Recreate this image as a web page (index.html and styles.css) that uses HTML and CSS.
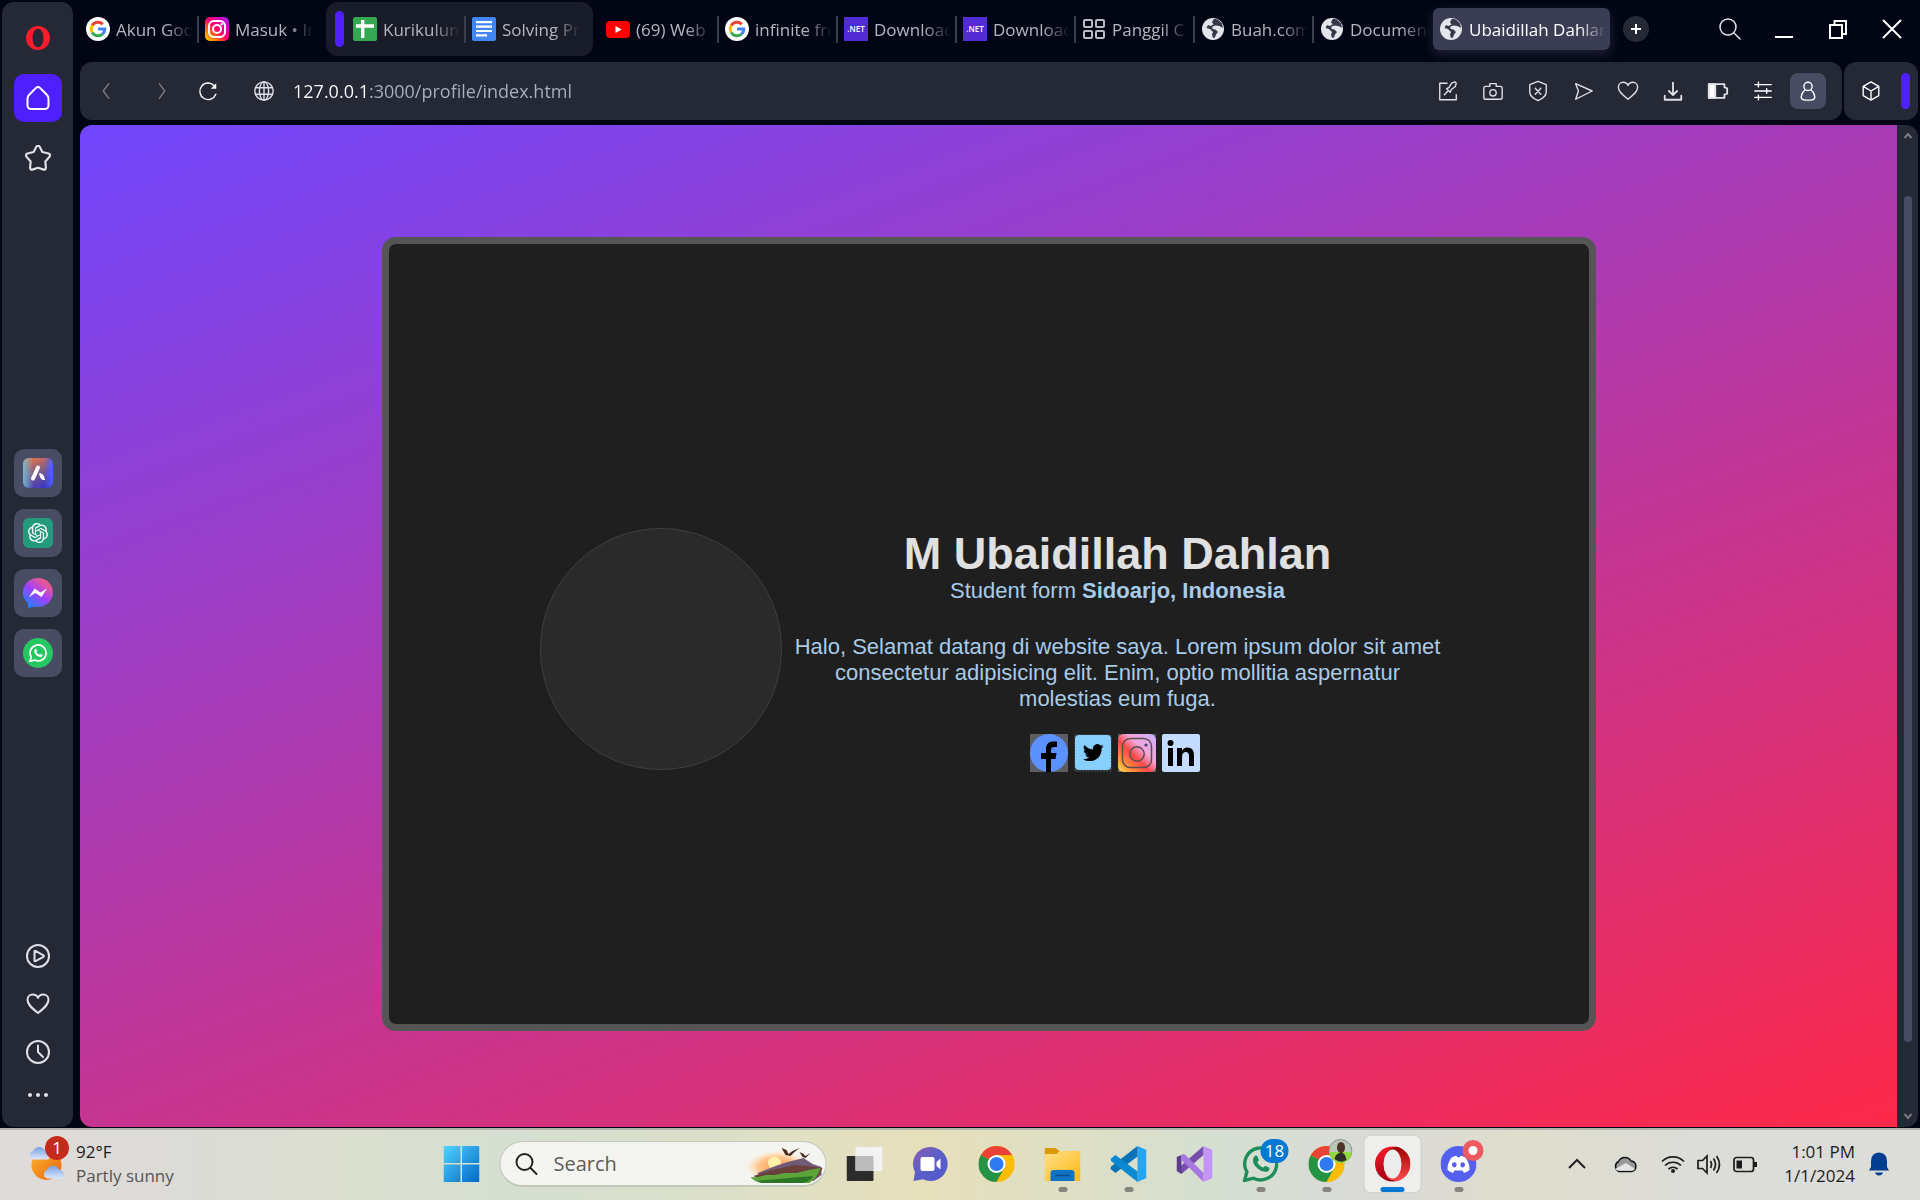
FILE: index.html
```html
<!DOCTYPE html>
<html lang="en">
<head>
<meta charset="utf-8">
<title>Ubaidillah Dahlan</title>
<link rel="stylesheet" href="styles.css">
</head>
<body>
<svg class="defs" aria-hidden="true">
  <defs>
    <linearGradient id="ig" x1="0" y1="1" x2="1" y2="0"><stop offset="0" stop-color="#ffd600"/><stop offset=".25" stop-color="#ff7a00"/><stop offset=".5" stop-color="#ff0069"/><stop offset=".8" stop-color="#d300c5"/><stop offset="1" stop-color="#7638fa"/></linearGradient>
    <linearGradient id="igx" x1="0" y1="1" x2="1" y2="0"><stop offset="0" stop-color="#ffe14d"/><stop offset=".22" stop-color="#ff8a3d"/><stop offset=".42" stop-color="#ff4646"/><stop offset=".62" stop-color="#f2a6d8"/><stop offset="1" stop-color="#cdb0ff"/></linearGradient>
    <linearGradient id="aria" x1=".3" y1="0" x2=".7" y2="1"><stop offset="0" stop-color="#e0704a"/><stop offset=".5" stop-color="#7a5a8c"/><stop offset="1" stop-color="#3a35c0"/></linearGradient>
    <linearGradient id="ariaSide" x1="0" y1="0" x2="1" y2="0"><stop offset="0" stop-color="#6fc0d8" stop-opacity=".9"/><stop offset=".35" stop-color="#6fc0d8" stop-opacity="0"/><stop offset=".7" stop-color="#4a60ff" stop-opacity="0"/><stop offset="1" stop-color="#4a60ff"/></linearGradient>
    <linearGradient id="msg" x1="0.1" y1="1" x2=".8" y2="0"><stop offset="0" stop-color="#0a8cff"/><stop offset=".5" stop-color="#a040ff"/><stop offset="1" stop-color="#ff6070"/></linearGradient>
    <linearGradient id="win" x1="0" y1="0" x2="1" y2="1"><stop offset="0" stop-color="#4fd4ff"/><stop offset="1" stop-color="#0067c8"/></linearGradient>
    <linearGradient id="sun" x1="0" y1="0" x2="1" y2="1"><stop offset="0" stop-color="#f8b830"/><stop offset="1" stop-color="#f0600c"/></linearGradient>
    <linearGradient id="cloud" x1="0" y1="0" x2="0" y2="1"><stop offset="0" stop-color="#7a9fe0"/><stop offset="1" stop-color="#dce8fb"/></linearGradient>
    <linearGradient id="operaL" x1="0" y1="0" x2="0" y2="1"><stop offset="0" stop-color="#ff1b2d"/><stop offset="1" stop-color="#a00012"/></linearGradient>
    <linearGradient id="operaR" x1="0" y1="0" x2="0" y2="1"><stop offset="0" stop-color="#9c0000"/><stop offset="1" stop-color="#ff4b4b"/></linearGradient>
    <linearGradient id="teams" x1="0" y1="0" x2="1" y2="1"><stop offset="0" stop-color="#8a5fb0"/><stop offset=".5" stop-color="#5a5fc8"/><stop offset="1" stop-color="#5059c9"/></linearGradient>
    <linearGradient id="folder" x1="0" y1="0" x2="1" y2="1"><stop offset="0" stop-color="#ffe08a"/><stop offset="1" stop-color="#fdb813"/></linearGradient>
    <radialGradient id="glow"><stop offset="0" stop-color="#ff9a50"/><stop offset=".6" stop-color="#ffc58c"/><stop offset="1" stop-color="#ffe9c8" stop-opacity="0"/></radialGradient>
    <symbol id="i-google" viewBox="0 0 24 24"><circle cx="12" cy="12" r="12" fill="#fff"/><g fill="none" stroke-width="3"><path d="M6.2 8.6A6.8 6.8 0 0 1 16.8 7.2" stroke="#ea4335"/><path d="M6.2 15.4a6.8 6.8 0 0 1 0-6.8" stroke="#fbbc05"/><path d="M16.4 17.2a6.8 6.8 0 0 1-10.2-1.8" stroke="#34a853"/><path d="M12 12h6.8a6.8 6.8 0 0 1-2.4 5.2" stroke="#4285f4"/></g></symbol>
    <symbol id="i-insta" viewBox="0 0 24 24"><rect width="24" height="24" rx="5" fill="url(#ig)"/><g fill="none" stroke="#fff" stroke-width="2"><rect x="4" y="4" width="16" height="16" rx="5"/><circle cx="12" cy="12" r="4"/></g><circle cx="16.7" cy="7.3" r="1.2" fill="#fff"/></symbol>
    <symbol id="i-sheets" viewBox="0 0 24 24"><rect width="24" height="24" rx="2" fill="#34a853"/><path d="M9.700 3v18M3 9h18" stroke="#fff" stroke-width="3.4"/></symbol>
    <symbol id="i-docs" viewBox="0 0 24 24"><rect width="24" height="24" rx="2" fill="#4285f4"/><path d="M4 5.2h16M4 9.6h16M4 14h16M4 18.4h11" stroke="#fff" stroke-width="2.2"/></symbol>
    <symbol id="i-yt" viewBox="0 0 24 24"><rect y="4" width="24" height="17" rx="4" fill="#f00"/><path d="M9.500 9v7l6.200-3.500z" fill="#fff"/></symbol>
    <symbol id="i-net" viewBox="0 0 24 24"><rect width="24" height="24" fill="#512bd4"/><text x="12" y="15" text-anchor="middle" font-family="Open Sans, sans-serif" font-size="8" font-weight="600" fill="#fff">.NET</text></symbol>
    <symbol id="i-grid" viewBox="0 0 24 24"><g fill="none" stroke="#b9bbc2" stroke-width="2"><rect x="2" y="3" width="8" height="7" rx="1"/><rect x="14" y="3" width="8" height="7" rx="1"/><rect x="2" y="14" width="8" height="7" rx="1"/><rect x="14" y="14" width="8" height="7" rx="1"/></g></symbol>
    <symbol id="i-earth" viewBox="0 0 24 24"><circle cx="12" cy="12" r="11" fill="#e4e6ec"/><path d="M13 1.800 11 5l1.500 2.500-3 1.500-2.500-1-1.500 3 3.500 1 3 3-1 2.500 1 3.500 2-.5 1-3 2-2.500-2.500-2.500-3-.5 0-2.500 3-1 4 .5 3.500 2-1-4.500-4-4z" fill="#343849"/></symbol>
    <symbol id="i-heart" viewBox="0 0 24 24"><path d="M12 21C5 15.500 1.500 12.200 1.500 7.800 1.500 4.600 3.900 2.500 6.700 2.500 9.200 2.500 11.200 4 12 6c.8-2 2.800-3.500 5.300-3.500 2.800 0 5.200 2.100 5.200 5.300C22.500 12.200 19 15.500 12 21z"/></symbol>
    <symbol id="i-search" viewBox="0 0 24 24"><circle cx="10" cy="10" r="8"/><path d="m16 16 6 6"/></symbol>
    <symbol id="i-chrome" viewBox="0 0 36 36"><circle cx="18" cy="18" r="18" fill="#fbbc05"/><path d="M18 18 2.400 9A18 18 0 0 1 33.600 9z" fill="#ea4335"/><path d="M18 18 2.400 9A18 18 0 0 0 18 36l7.800-13.500z" fill="#249345"/><path d="M18 9h15.600A18 18 0 0 1 18 36l7.800-13.500z" fill="#fbbc05"/><circle cx="18" cy="18" r="9" fill="#fff"/><circle cx="18" cy="18" r="7" fill="#2f7af0"/></symbol>
    <symbol id="i-wa" viewBox="0 0 36 36"><path d="M2 34.500 4.400 26A16 16 0 1 1 11 32.200z" fill="none" stroke-width="3.400" stroke="currentColor"/><path d="M12.500 10c1-.8 2-.5 2.500.5l1.300 3c.3 1-.9 2-1.500 2.700 1.300 2.600 3.300 4.300 6 5.400.8-.7 1.500-2 2.600-1.600l3 1.500c.9.500.6 2.300-.2 3.200-4 4-15.500-3-15.800-10.200 0-1.800 1-3.700 2.100-4.500z" fill="currentColor"/></symbol>
  </defs>
</svg>

<div class="desktop">
  <nav class="sidebar" aria-label="Browser sidebar">
    <button class="side-btn logo" aria-label="Opera"><svg viewBox="0 0 24 24"><path fill-rule="evenodd" d="M12 0a12 12 0 1 0 0 24A12 12 0 1 0 12 0zm0 2.800c3.300 0 5.400 4 5.400 9.200S15.300 21.200 12 21.200 6.600 17.200 6.600 12 8.700 2.800 12 2.800z" fill="#ff1b2d"/></svg></button>
    <button class="side-btn home" aria-label="Home"><svg class="line" viewBox="0 0 24 24"><path d="M10 1.900 3.200 8.700C2 10 1.500 11 1.500 12.500V19.500A3.500 3.500 0 0 0 5 23h14a3.500 3.500 0 0 0 3.500-3.500v-7c0-1.500-.5-2.500-1.700-3.800L14 1.900a2.800 2.800 0 0 0-4 0z"/></svg></button>
    <button class="side-btn" aria-label="Bookmarks"><svg class="line star" viewBox="0 0 24 24"><path d="M10.500 1.500Q12-.5 13.500 1.500L16 6.500 21.800 7.800Q24 8.800 22.500 11L18.800 15.300 19.300 21Q19 23.500 16.500 22.500L12 21 7.500 22.500Q5 23.500 4.700 21L5.200 15.300 1.500 11Q0 8.800 2.200 7.800L8 6.500z"/></svg></button>
    <div class="side-apps">
      <button class="side-btn app" aria-label="Aria"><svg viewBox="0 0 30 30"><rect width="30" height="30" rx="6" fill="url(#aria)"/><rect width="30" height="30" rx="6" fill="url(#ariaSide)"/><path d="m10 20.500 5-11" stroke="#fff" stroke-width="4" stroke-linecap="round"/><path d="M16 15q5 0 6 7-5 1-6-7z" fill="#fff"/></svg></button>
      <button class="side-btn app" aria-label="ChatGPT"><svg viewBox="0 0 36 36"><rect width="36" height="36" rx="7" fill="#249a7d"/><path transform="translate(6 6)" fill="#fff" d="M22.2819 9.8211a5.9847 5.9847 0 0 0-.5157-4.9108 6.0462 6.0462 0 0 0-6.5098-2.9A6.0651 6.0651 0 0 0 4.9807 4.1818a5.9847 5.9847 0 0 0-3.9977 2.9 6.0462 6.0462 0 0 0 .7427 7.0966 5.98 5.98 0 0 0 .511 4.9107 6.051 6.051 0 0 0 6.5146 2.9001A5.9847 5.9847 0 0 0 13.2599 24a6.0557 6.0557 0 0 0 5.7718-4.2058 5.9894 5.9894 0 0 0 3.9977-2.9001 6.0557 6.0557 0 0 0-.7475-7.0729zm-9.022 12.6081a4.4755 4.4755 0 0 1-2.8764-1.0408l.1419-.0804 4.7783-2.7582a.7948.7948 0 0 0 .3927-.6813v-6.7369l2.02 1.1686a.071.071 0 0 1 .038.052v5.5826a4.504 4.504 0 0 1-4.4945 4.4944zm-9.6607-4.1254a4.4708 4.4708 0 0 1-.5346-3.0137l.142.0852 4.783 2.7582a.7712.7712 0 0 0 .7806 0l5.8428-3.3685v2.3324a.0804.0804 0 0 1-.0332.0615L9.74 19.9502a4.4992 4.4992 0 0 1-6.1408-1.6464zM2.3408 7.8956a4.485 4.485 0 0 1 2.3655-1.9728V11.6a.7664.7664 0 0 0 .3879.6765l5.8144 3.3543-2.0201 1.1685a.0757.0757 0 0 1-.071 0l-4.8303-2.7865A4.504 4.504 0 0 1 2.3408 7.8956zm16.5963 3.8558L13.1038 8.364 15.1192 7.2a.0757.0757 0 0 1 .071 0l4.8303 2.7913a4.4944 4.4944 0 0 1-.6765 8.1042v-5.6772a.79.79 0 0 0-.407-.667zm2.0107-3.0231l-.142-.0852-4.7735-2.7818a.7759.7759 0 0 0-.7854 0L9.409 9.2297V6.8974a.0662.0662 0 0 1 .0284-.0615l4.8303-2.7866a4.4992 4.4992 0 0 1 6.6802 4.66zM8.3065 12.863l-2.02-1.1638a.0804.0804 0 0 1-.038-.0567V6.0742a4.4992 4.4992 0 0 1 7.3757-3.4537l-.142.0805L8.704 5.459a.7948.7948 0 0 0-.3927.6813zm1.0976-2.3654l2.602-1.4998 2.6069 1.4998v2.9994l-2.5974 1.4997-2.6067-1.4997Z"/></svg></button>
      <button class="side-btn app" aria-label="Messenger"><svg viewBox="0 0 30 30"><path d="M15 0a15 14.500 0 1 1-4 28.500L6 30c-1 0-1-1-1-4.500A14.500 14.500 0 0 1 15 0z" fill="url(#msg)"/><path d="m6 19 5.500-8.500 6 4L24 10.500l-5.500 8.500-6-4z" fill="#fff"/></svg></button>
      <button class="side-btn app" aria-label="WhatsApp"><svg viewBox="0 0 30 30"><circle cx="15" cy="15" r="15" fill="#25c763"/><use href="#i-wa" x="6" y="6" width="18" height="18" color="#fff"/></svg></button>
    </div>
    <div class="side-foot">
      <button class="foot-btn" aria-label="Player"><svg class="line" viewBox="0 0 24 24"><circle cx="12" cy="12" r="11"/><path d="M8.500 7.500v9q0 1 1 .6l8-4.300q1-.7 0-1.500l-8-4.400q-1-.4-1 .6z"/></svg></button>
      <button class="foot-btn" aria-label="Pinboards"><svg class="line"><use href="#i-heart"/></svg></button>
      <button class="foot-btn" aria-label="History"><svg class="line" viewBox="0 0 24 24"><circle cx="12" cy="12" r="11"/><path d="M12 5.500V12l5 5"/></svg></button>
      <button class="foot-btn dots" aria-label="More"><svg viewBox="0 0 24 24"><g fill="#dfe1e6"><circle cx="4" cy="12" r="2"/><circle cx="12" cy="12" r="2"/><circle cx="20" cy="12" r="2"/></g></svg></button>
    </div>
  </nav>

  <div class="browser">
    <header class="tabstrip">
      <button class="tab sep"><svg><use href="#i-google"/></svg><span>Akun Goo</span></button>
      <button class="tab"><svg><use href="#i-insta"/></svg><span>Masuk • In</span></button>
      <div class="tab-group">
        <i class="pill"></i>
        <button class="tab sep"><svg><use href="#i-sheets"/></svg><span>Kurikulum</span></button>
        <button class="tab"><svg><use href="#i-docs"/></svg><span>Solving Pr</span></button>
      </div>
      <button class="tab sep"><svg><use href="#i-yt"/></svg><span>(69) Web</span></button>
      <button class="tab sep"><svg><use href="#i-google"/></svg><span>infinite fre</span></button>
      <button class="tab sep"><svg><use href="#i-net"/></svg><span>Download</span></button>
      <button class="tab sep"><svg><use href="#i-net"/></svg><span>Download</span></button>
      <button class="tab sep"><svg><use href="#i-grid"/></svg><span>Panggil C</span></button>
      <button class="tab sep"><svg><use href="#i-earth"/></svg><span>Buah.com</span></button>
      <button class="tab"><svg><use href="#i-earth"/></svg><span>Document</span></button>
      <button class="tab active"><svg><use href="#i-earth"/></svg><span>Ubaidillah Dahlan</span></button>
      <button class="new-tab" aria-label="New tab"><svg viewBox="0 0 12 12"><path d="M6 1v10M1 6h10" stroke="#fff" stroke-width="2"/></svg></button>
      <div class="win-ctl">
        <button aria-label="Search tabs"><svg class="line thin"><use href="#i-search"/></svg></button>
        <button aria-label="Minimize"><svg viewBox="0 0 24 24"><path d="M3 20h18" stroke="#fff" stroke-width="2"/></svg></button>
        <button aria-label="Restore"><svg viewBox="0 0 24 24" fill="none" stroke="#fff" stroke-width="2"><path d="M4 8h12v13H4zM8.500 8V4H20v13h-4"/></svg></button>
        <button aria-label="Close"><svg viewBox="0 0 24 24"><path d="m3 3 18 18M21 3 3 21" stroke="#fff" stroke-width="2"/></svg></button>
      </div>
    </header>

    <div class="bars">
      <div class="toolbar">
        <button class="nav-btn dim" aria-label="Back"><svg class="line thin" viewBox="0 0 24 24"><path d="m15 4-6 8 6 8"/></svg></button>
        <button class="nav-btn dim" aria-label="Forward"><svg class="line thin" viewBox="0 0 24 24"><path d="m9 4 6 8-6 8"/></svg></button>
        <button class="nav-btn reload" aria-label="Reload"><svg class="line thin" viewBox="0 0 24 24"><path d="M20.500 15.500A9 9 0 1 1 18.500 6L20 8"/><path d="M21 3.500v6h-6z" fill="#fff" stroke="none"/></svg></button>
        <button class="nav-btn site" aria-label="Site information"><svg class="line thin" viewBox="0 0 24 24"><circle cx="12" cy="12" r="10"/><ellipse cx="12" cy="12" rx="5" ry="10"/><path d="M3 8.500h18M3 15.500h18M12 2v20"/></svg></button>
        <input class="url" type="text" aria-label="Address" value="127.0.0.1:3000/profile/index.html">
        <div class="tools">
          <button aria-label="Easy setup"><svg class="line thin" viewBox="0 0 24 24"><path d="M11 3.500H3v18h18V16M8 16l4.500-4.500M10.500 9.500l4 4 .8-2.800L20 7l1-3.500L19.500 2 16 3.500l-3 4.800z"/></svg></button>
          <button aria-label="Snapshot"><svg class="line thin" viewBox="0 0 24 24"><path d="M8.500 4h7v3H20q2 0 2 2v10q0 2-2 2H4q-2 0-2-2V9q0-2 2-2h4.500z"/><circle cx="12" cy="14" r="3.500"/></svg></button>
          <button aria-label="Ad blocker"><svg class="line thin" viewBox="0 0 24 24"><path d="M12 1.500 21 5v8q0 5.500-9 9.500-9-4-9-9.500V5zM9 9l6 6.500M15 9l-6 6.500"/></svg></button>
          <button aria-label="Flow"><svg class="line thin" viewBox="0 0 24 24"><path d="m4 4 18 8L4 21l3-9z"/></svg></button>
          <button aria-label="Favourite"><svg class="line thin"><use href="#i-heart"/></svg></button>
          <button aria-label="Downloads"><svg class="line" viewBox="0 0 24 24"><path d="M12 3v13m-4.500-4 4.500 4.500 4.500-4.500M3 17v4.500h18V17"/></svg></button>
          <button aria-label="Battery saver"><svg class="line" viewBox="0 0 24 24"><path d="M2 4.500h17V8l3 1v6l-3 1v3.500H2z"/><path d="M2 4.500h7v15H2z" fill="#fff"/></svg></button>
          <button aria-label="Settings"><svg class="line thin bright" viewBox="0 0 24 24"><path d="M3 5h18M3 12h18M3 19h18M7 2.500v5M16 9.500v5M7 16.500v5"/></svg></button>
          <button class="profile" aria-label="Profile"><svg class="line thin bright" viewBox="0 0 24 24"><circle cx="12" cy="7" r="4.500"/><path d="M8.500 11Q5 14 4.500 18.500 5 22 9 22h6q4 0 4.500-3.500Q19 14 15.500 11"/></svg></button>
        </div>
      </div>
      <div class="extras">
        <button aria-label="Extensions"><svg class="line thin bright" viewBox="0 0 24 24"><path d="m12 2 8.500 5v10L12 22l-8.500-5V7zM3.500 7l8.500 5 8.500-5M12 12v10"/></svg></button>
        <i class="pill"></i>
      </div>
    </div>

    <div class="viewport">
      <main class="page">
        <section class="card">
          <div class="avatar"></div>
          <div class="about">
            <h1>M Ubaidillah Dahlan</h1>
            <p>Student form <b>Sidoarjo, Indonesia</b></p>
            <p class="bio">Halo, Selamat datang di website saya. Lorem ipsum dolor sit amet consectetur adipisicing elit. Enim, optio mollitia aspernatur molestias eum fuga.</p>
            <div class="social">
              <a href="#fb" aria-label="Facebook"><svg viewBox="0 0 38 38"><rect width="38" height="38" fill="#5b5e62"/><circle cx="19" cy="19" r="19" fill="#5c92ff"/><path d="M16 38V25h-5v-6h5v-4c0-5 3-7.500 7-7.500h4V13h-2.500c-2.500 0-3.500 1-3.500 3v3h5.500l-1 6H21v13z" fill="#000"/></svg></a>
              <a href="#tw" aria-label="Twitter"><svg viewBox="0 0 38 38"><rect x="1" y="1" width="36" height="36" fill="none" stroke="#555a60" stroke-dasharray="2 1"/><rect x="1" y="1" width="36" height="35" rx="4" fill="#86cfff"/><path d="M29.500 12q-1 .5-2.300.7 1.300-.8 1.800-2.200-1.200.8-2.600 1a4.300 4.300 0 0 0-7.300 3.900q-5.300-.3-8.700-4.500a4.300 4.300 0 0 0 1.300 5.700q-1 0-1.900-.5 0 3.300 3.400 4.300-1 .2-1.900 0 .9 2.800 4 3-2.800 2-6.300 1.800 3 2 6.600 1.900c8 0 12.300-6.500 12-12.700q1.300-1 1.900-2.400z" fill="#000"/></svg></a>
              <a href="#ig" aria-label="Instagram"><svg viewBox="0 0 38 38"><rect width="38" height="38" fill="#66615f"/><rect width="38" height="38" rx="6" fill="url(#igx)"/><g fill="none" stroke="#5a4d50" stroke-width="1.500"><rect x="4.500" y="4.500" width="29" height="29" rx="8"/><circle cx="19" cy="20" r="7.200"/></g><circle cx="28" cy="11" r="1.600" fill="#4a3d60"/></svg></a>
              <a href="#in" aria-label="LinkedIn"><svg viewBox="0 0 38 38"><rect width="38" height="38" rx="2" fill="#c3dcff"/><circle cx="8.500" cy="9" r="3" fill="#000"/><path d="M6 14h5v18H6zM15 14h5v2.500q2-3 5.500-3 6.500 0 6.500 8V32h-5V22.500q0-4.500-3-4.500-4 0-4 5v9h-5z" fill="#000"/></svg></a>
            </div>
          </div>
        </section>
      </main>
      <div class="scrollbar">
        <svg viewBox="0 0 10 10"><path d="m1.500 7 3.500-4 3.500 4" /></svg>
        <div class="track"><i></i></div>
        <svg viewBox="0 0 10 10"><path d="m1.500 3 3.500 4 3.500-4" /></svg>
      </div>
    </div>
  </div>
</div>

<footer class="taskbar">
  <button class="weather">
    <span class="weather-icon"><svg viewBox="0 0 38 38"><circle cx="18.500" cy="20" r="15" fill="url(#sun)"/><path d="M5 14.500a4.500 4.500 0 0 1 0-8.500 7 7 0 0 1 12-1q7 2 3.500 9.500z" fill="url(#cloud)"/><path d="M19 33.500a4.500 4.500 0 0 1 0-8.500 6.500 6.500 0 0 1 12-.5q5 1 5 5 0 4-3 4z" fill="url(#cloud)"/></svg><em>1</em></span>
    <span class="two"><span>92°F</span><small>Partly sunny</small></span>
  </button>
  <div class="tasks">
    <button class="task start" aria-label="Start"><svg viewBox="0 0 36 36"><path d="M1 0h16v17H0V1q0-1 1-1zM18.500 0H35q1 0 1 1v16H18.500zM0 18.500h17V36H1q-1 0-1-1zM18.500 18.500H36V35q0 1-1 1H18.500z" fill="url(#win)"/></svg></button>
    <label class="search">
      <svg class="line"><use href="#i-search"/></svg>
      <input type="search" placeholder="Search" aria-label="Search">
      <svg class="scene" viewBox="0 0 78 38"><ellipse cx="32" cy="20" rx="32" ry="17" fill="url(#glow)"/><circle cx="29" cy="16" r="6.500" fill="#fff0a8"/><path d="M12 26 30 19l12-4 16-4 9 6 9 3v8l-8 6H18z" fill="#715a76"/><path d="M8 29l18-6 10-2 12-3 12 1 17 2-4 8-10 6H20z" fill="#6b3f3c"/><path d="M5 30q8 1 15-2l9 0 10-2 12 0 12-3 12-2q-3 10-11 15H16Q9 35 5 30z" fill="#5ba53a"/><path d="M12 34q18-2 56-5-4 6-12 7H16z" fill="#2e7427"/><path d="m36 1 5 2 2 4 4-3 7-3-6 5-3 3-5-1zM54 5l4 2 2 2 5-3-5 5-3-1z" fill="#4a2c20"/></svg>
    </label>
    <button class="task" aria-label="Task view"><svg viewBox="0 0 36 36"><rect y="10" width="27" height="25" rx="1" fill="#2c2c2b"/><rect x="9" y="1" width="27" height="24" rx="1" fill="#f2f2f2"/><path d="M9 10h18v15H9z" fill="#bcbcbc"/></svg></button>
    <button class="task" aria-label="Chat"><svg viewBox="0 0 36 36"><path d="M18 1a17 17 0 1 1-7.500 32.200L1 35l1.500-9A17 17 0 0 1 18 1z" fill="url(#teams)"/><rect x="8" y="11" width="14" height="14" rx="2" fill="#fff"/><path d="m24 16 4-3.500v11L24 20z" fill="#fff"/></svg></button>
    <button class="task" aria-label="Chrome"><svg><use href="#i-chrome"/></svg></button>
    <button class="task run" aria-label="File Explorer"><svg viewBox="0 0 36 36"><path d="M0 3q0-1 1-1h10l4 3v8H0z" fill="#dc9b05"/><path d="M0 8h12l3-3h20q1 0 1 1v29H0z" fill="url(#folder)"/><path d="M6 35V27q0-3 3-3h18q3 0 3 3v8z" fill="#0f72c4"/><path d="M11 29.500h14" stroke="#0a4c90" stroke-width="1.500"/></svg></button>
    <button class="task run" aria-label="Visual Studio Code"><svg viewBox="0 0 36 36"><path d="m27 0 9 4v28l-9 4z" fill="#27a4f2"/><path d="M27 0v10.500L5 27l-5-4q-.5-1 0-2z" fill="#0a72b8"/><path d="M27 36V25.500L5 9 .5 12.500q-1 1 0 2.500z" fill="#0b88d2"/></svg></button>
    <button class="task" aria-label="Visual Studio"><svg viewBox="0 0 36 36"><path d="M5 28 27 9V0L3 21z" fill="#7750ad"/><path d="M0 11v14l5 3V9z" fill="#5c3d91"/><path d="M5 9q2-2 4 0l18 18v9L5 14z" fill="#a778df"/><path d="m27 0 9 4v28l-9 4z" fill="#c494f7"/></svg></button>
    <button class="task run wa" aria-label="WhatsApp"><svg><use href="#i-wa"/></svg><em class="count">18</em></button>
    <button class="task run" aria-label="Chrome profile"><svg><use href="#i-chrome"/></svg><em class="face"><svg viewBox="0 0 24 24"><circle cx="12" cy="12" r="11.500" fill="#bdc9b8" stroke="#8a8f86"/><path d="M1 13h22a11 11 0 0 1-22 0z" fill="#8fdc3c"/><path d="M6 20q1-5 5-6h3q3 1 4 7-6 4-12-1z" fill="#2f2c2a"/><ellipse cx="12.500" cy="8.500" rx="4" ry="5.500" fill="#4b3527"/></svg></em></button>
    <button class="task run current" aria-label="Opera"><svg viewBox="0 0 36 36"><ellipse cx="18" cy="18" rx="17.500" ry="17.500" fill="url(#operaL)"/><path d="M12 5.500q4-4.500 10-4.800A17.500 17.500 0 0 1 22 35q-6-.5-10-4.500z" fill="url(#operaR)"/><ellipse cx="18" cy="18" rx="9" ry="14.500" fill="#ececec"/></svg></button>
    <button class="task run" aria-label="Discord"><svg viewBox="0 0 36 36"><circle cx="18" cy="18" r="18" fill="#5560ee"/><path d="M11 11.500q3-1.700 5-1.800l.8 1.500h2.400l.8-1.500q2 .1 5 1.800 4.500 6.500 4 12.500-2.500 2.200-5.500 3l-1.500-2.500h-8L12.500 27Q9.500 26.200 7 24q-.5-6 4-12.500z" fill="#fff"/><ellipse cx="13.800" cy="18.800" rx="2.300" ry="2.600" fill="#5560ee"/><ellipse cx="22.200" cy="18.800" rx="2.300" ry="2.600" fill="#5560ee"/></svg><em class="live"></em></button>
  </div>
  <div class="tray">
    <button aria-label="Show hidden icons"><svg viewBox="0 0 24 24" fill="none" stroke="#222" stroke-width="2"><path d="m4 16 8-8 8 8"/></svg></button>
    <button class="cloud" aria-label="OneDrive"><svg viewBox="0 0 24 24"><path d="M6 19.500a5.500 5.500 0 0 1-.5-10A7 7 0 0 1 18 9a5.300 5.300 0 0 1 .5 10.500z" fill="#999" stroke="#111" stroke-width="1.500"/><path d="M2 17 13 11l9 6q-1 1.800-3 1.800H6q-3 0-4-1.800z" fill="#e4e4e4"/></svg></button>
    <button aria-label="Network"><svg viewBox="0 0 24 24" fill="none" stroke="#1c1c1c" stroke-width="1.700"><path d="M1 9.500a15.500 15.500 0 0 1 22 0M4 13.500a11.500 11.500 0 0 1 16 0M7.500 17a7 7 0 0 1 9 0"/><circle cx="12" cy="19" r="2" fill="#1c1c1c" stroke="none"/></svg></button>
    <button aria-label="Volume"><svg viewBox="0 0 24 24" fill="none" stroke="#1c1c1c" stroke-width="1.700"><path d="M1 8.500h4.500L10 4v17l-4.500-4.500H1zM13.500 9q2 3.500 0 7M16.500 6.500q4 6 0 12M19.500 4q6 8.500 0 17"/></svg></button>
    <button aria-label="Battery"><svg viewBox="0 0 24 24" fill="none" stroke="#1c1c1c" stroke-width="1.700"><rect x="1" y="5.500" width="19.500" height="14" rx="2.500"/><path d="M3.500 8.500H9v8H3.500z" fill="#1c1c1c" stroke="none"/><path d="M22.500 10v5" stroke-width="3"/></svg></button>
    <button class="two clock"><span>1:01 PM</span><span>1/1/2024</span></button>
    <button class="bell" aria-label="Notifications"><svg viewBox="0 0 24 24"><path d="M12 .5q8 .5 8 8.500v6l2 3.500H2L4 15V9q0-8 8-8.500zM8 20.500h8Q15 23.500 12 23.500T8 20.500z" fill="#003e92"/></svg></button>
  </div>
</footer>
</body>
</html>
```
FILE: styles.css
```css
* { box-sizing: border-box; }

body {
  margin: 0;
  height: 100vh;
  display: flex;
  flex-direction: column;
  overflow: hidden;
  background: #020514;
  font-family: "Open Sans", "Noto Sans", sans-serif;
  color: #fff;
}

button {
  padding: 0;
  border: 0;
  background: none;
  color: inherit;
  font: inherit;
  display: flex;
  align-items: center;
  justify-content: center;
  flex: none;
}

svg { display: block; width: 24px; height: 24px; flex: none; }
.defs { position: absolute; width: 0; height: 0; }
.line { fill: none; stroke: #dfe1e6; stroke-width: 2; stroke-linecap: round; stroke-linejoin: round; }
.thin { stroke-width: 1.5; }
.bright { stroke: #fff; }
em { font-style: normal; }

.desktop { flex: 1; min-height: 0; display: flex; }

/* Sidebar */
.sidebar {
  width: 71px;
  margin: 2px 7px 1px 2px;
  padding: 12px 12px 25px;
  border-radius: 12px;
  background: #252935;
  display: flex;
  flex-direction: column;
  align-items: center;
  gap: 12px;
}
.side-btn { width: 48px; height: 48px; border-radius: 10px; }
.home { background: #4f1fff; }
.home .line { stroke: #fff; }
.star { width: 26px; height: 26px; }
.side-apps { margin: auto 0; display: flex; flex-direction: column; gap: 12px; }
.app { background: #494d64; }
.app svg { width: 30px; height: 30px; }
.side-foot { display: flex; flex-direction: column; gap: 24px; }
.foot-btn.dots { height: 14px; }

/* Tabs */
.browser { flex: 1; min-width: 0; display: flex; flex-direction: column; }
.tabstrip { height: 62px; padding: 0 0 4px; display: flex; align-items: center; }
.tab {
  width: 119px;
  height: 27px;
  padding: 0 4px 0 6px;
  gap: 6px;
  font-size: 17px;
  color: #b4b6bd;
}
.tab.sep { border-right: 2px solid #3b3e51; }
.tab span {
  flex: 1;
  min-width: 0;
  overflow: hidden;
  white-space: nowrap;
  text-align: left;
  mask-image: linear-gradient(to right, #000 65%, transparent);
}
.tab-group {
  height: 54px;
  margin: 0 7px 0 8px;
  padding: 0 8px 0 9px;
  border-radius: 12px;
  background: #181b28;
  display: flex;
  align-items: center;
}
.pill { width: 9px; height: 36px; border-radius: 5px; background: #4f1fff; flex: none; }
.tab-group .pill { margin-right: 3px; }
.tab.active {
  width: 177px;
  height: 42px;
  border-radius: 6px;
  background: #3a3d54;
  color: #fff;
  box-shadow: 0 4px 12px #3a3d5488;
}
.tab.active span { mask-image: linear-gradient(to right, #000 80%, transparent); }
.new-tab { width: 26px; height: 26px; margin-left: 13px; border-radius: 50%; background: #252935; }
.new-tab svg { width: 12px; height: 12px; }
.win-ctl { margin-left: auto; padding-right: 16px; display: flex; gap: 30px; }

/* Address bar */
.bars { height: 58px; display: flex; gap: 2px; padding-right: 2px; margin-bottom: 5px; }
.toolbar, .extras { background: #252935; border-radius: 12px; display: flex; align-items: center; }
.toolbar { flex: 1; min-width: 0; padding: 0 16px 0 14px; }
.toolbar svg, .extras svg { width: 22px; height: 22px; }
.nav-btn { width: 24px; height: 24px; margin-right: 32px; }
.nav-btn.dim { opacity: .45; }
.nav-btn.dim + .reload { margin-left: -10px; }
.reload .line { stroke: #fff; }
.nav-btn.site { margin-right: 17px; }
.url {
  flex: 1;
  min-width: 0;
  padding: 0;
  border: 0;
  outline: 0;
  font: 18px "Open Sans", "Noto Sans", sans-serif;
  line-height: 30px;
  color: transparent;
  background: linear-gradient(to right, #fff 77px, #aab1c0 77px);
  background-clip: text;
}
.tools { display: flex; align-items: center; gap: 23px; }
.tools .profile { width: 36px; height: 36px; margin-left: -7px; border-radius: 8px; background: #494d64; }
.extras { width: 74px; padding: 0 8px 0 16px; justify-content: space-between; }

/* Web page */
.viewport { flex: 1; min-height: 0; display: flex; margin: 0 2px 1px 0; border-radius: 12px; overflow: hidden; }
.page {
  flex: 1;
  min-width: 0;
  padding: 112px 16px 96px;
  display: flex;
  justify-content: center;
  background: linear-gradient(160deg, #7046fd, #fe2949);
}
.card {
  width: 100%;
  max-width: 1214px;
  padding: 30px 0 0 16px;
  border: 7px solid #555;
  border-radius: 14px;
  background: #1f1f1f;
  display: flex;
  align-items: center;
  justify-content: center;
  font-family: "Liberation Sans", Arial, sans-serif;
}
.avatar { width: 242px; height: 242px; border: 1px solid #3f3f3f; border-radius: 50%; background: #2a2a2a; flex: none; }
.about { width: 672px; padding: 4px 8px 0; text-align: center; font-size: 22px; line-height: 26px; color: #a8cbe8; }
.about h1 { margin: 0; font-size: 45px; line-height: 48px; color: #e0e0e0; }
.about p { margin: 0; }
.about .bio { margin: 30px 0 22px; }
.social { display: flex; justify-content: center; gap: 6px; padding-right: 6px; }
.social svg { width: 38px; height: 38px; }

.scrollbar {
  width: 21px;
  padding: 6px 0;
  background: #252935;
  display: flex;
  flex-direction: column;
  align-items: center;
}
.scrollbar svg { width: 10px; height: 10px; fill: none; stroke: #777a82; stroke-width: 2; }
.track { flex: 1; padding: 55px 0 69px; display: flex; }
.track i { width: 8px; border-radius: 4px; background: #494d64; }

/* Taskbar */
.taskbar {
  position: relative;
  height: 72px;
  padding-bottom: 2px;
  border-top: 2px solid #b3b4ac;
  background: linear-gradient(to right, #dfdbd8 0, #dcdbd8 9%, #dbdfcf 18%, #d5dfd1 27%, #dadfca 36%, #e6dfbb 48%, #dcdfc8 58%, #d5dfd1 63%, #dadad8 72%, #dfddcc 79%, #dcdcd8 88%, #dcdcd8 100%);
  color: #1c1c1c;
  font-size: 17px;
  line-height: 24px;
  display: flex;
  align-items: center;
  justify-content: space-between;
}
.two { display: flex; flex-direction: column; }
.weather { padding-left: 28px; gap: 10px; text-align: left; }
.weather small { font-size: 17px; color: #555; }
.weather-icon { position: relative; }
.weather-icon svg { width: 38px; height: 38px; }
.weather-icon em, .count, .face, .live { position: absolute; border-radius: 12px; height: 24px; text-align: center; }
.weather-icon em { right: -3px; top: -9px; width: 24px; background: #c42b1c; color: #fff; }

.tasks { position: absolute; left: 50%; transform: translateX(-50%); display: flex; align-items: center; gap: 10px; }
.task { position: relative; width: 56px; height: 56px; border-radius: 6px; }
.task svg { width: 36px; height: 36px; }
.task.run::after {
  content: "";
  position: absolute;
  bottom: 0;
  width: 9px;
  height: 5px;
  border-radius: 3px;
  background: #85857d;
}
.task.current { background: #eeeeec; box-shadow: 0 0 1px 1px #d2d2ce; }
.task.run.current::after { width: 24px; background: #0078d4; }
.wa { color: #1e8e5a; }
.count { top: 3px; right: 0; width: 28px; background: #0078d4; color: #fff; }
.task .face, .task .face svg { width: 24px; height: 24px; }
.face { top: 3px; right: 2px; }
.live { top: 4px; right: 3px; width: 21px; height: 21px; border: 6px solid #ec5a60; background: #fff; }
.search {
  width: 327px;
  height: 46px;
  padding: 0 2px 0 14px;
  border: 1px solid #c3c9b8;
  border-bottom-width: 2px;
  border-radius: 23px;
  background: #f4f5f0;
  display: flex;
  align-items: center;
}
.search .line { stroke: #222; }
.search input {
  flex: 1;
  min-width: 0;
  margin-left: 15px;
  padding: 0;
  border: 0;
  outline: 0;
  background: none;
  font: 20px "Open Sans", "Noto Sans", sans-serif;
}
.search input::placeholder { color: #5c5c5c; opacity: 1; }
.search .scene { width: 78px; height: 38px; align-self: flex-end; }

.tray { display: flex; align-items: center; gap: 12px; padding-right: 29px; }
.tray .cloud { margin: 0 12px; }
.tray .clock { margin-left: 15px; align-items: flex-end; }
```
